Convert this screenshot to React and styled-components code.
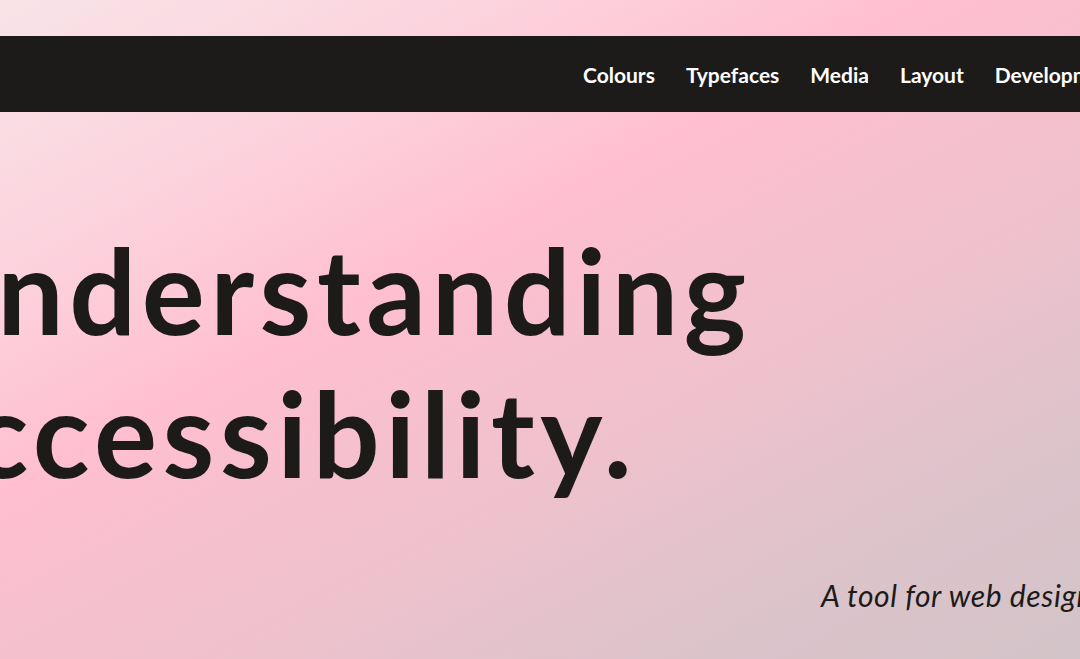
import React from "react";
import styled, { createGlobalStyle } from "styled-components";

const Global = createGlobalStyle`
  html, body { margin: 0; padding: 0; }
  body {
    width: 1080px;
    height: 659px;
    overflow: hidden;
    font-family: "Lato", "Noto Sans", sans-serif;
    color: #1c1b19;
  }
`;

const Page = styled.div`
  width: 1080px;
  height: 659px;
  overflow: hidden;
  padding-top: 36px;
  box-sizing: border-box;
  background: linear-gradient(152deg, #f8e4e8 0%, #fcd3de 22%, #ffbfd1 40%, #efc1cd 62%, #dec3cb 80%, #d2c4c8 100%);
`;

const NavBar = styled.header`
  height: 76px;
  background: #1c1b19;
  display: flex;
  align-items: center;
  padding-left: 583px;
  overflow: hidden;
`;

const NavList = styled.nav`
  display: flex;
  gap: 31px;
  white-space: nowrap;
`;

const NavLink = styled.a`
  color: #ffffff;
  font-weight: 700;
  font-size: 21px;
  text-decoration: none;
  letter-spacing: 0;
`;

const Hero = styled.main`
  padding-top: 106px;
`;

const Title = styled.h1`
  margin: 0 0 0 -94px;
  font-size: 118px;
  line-height: 143px;
  font-weight: 700;
  white-space: nowrap;
  letter-spacing: 5.5px;
`;

const Tagline = styled.p`
  margin: 73px 0 0 821px;
  font-size: 30px;
  font-style: italic;
  font-weight: 400;
  white-space: nowrap;
  letter-spacing: 0.6px;
`;

export default function App() {
  return (
    <>
      <Global />
      <Page>
        <NavBar>
          <NavList>
            <NavLink href="#">Colours</NavLink>
            <NavLink href="#">Typefaces</NavLink>
            <NavLink href="#">Media</NavLink>
            <NavLink href="#">Layout</NavLink>
            <NavLink href="#">Development</NavLink>
          </NavList>
        </NavBar>
        <Hero>
          <Title>
            Understanding
            <br />
            accessibility.
          </Title>
          <Tagline>A tool for web designers and developers.</Tagline>
        </Hero>
      </Page>
    </>
  );
}
